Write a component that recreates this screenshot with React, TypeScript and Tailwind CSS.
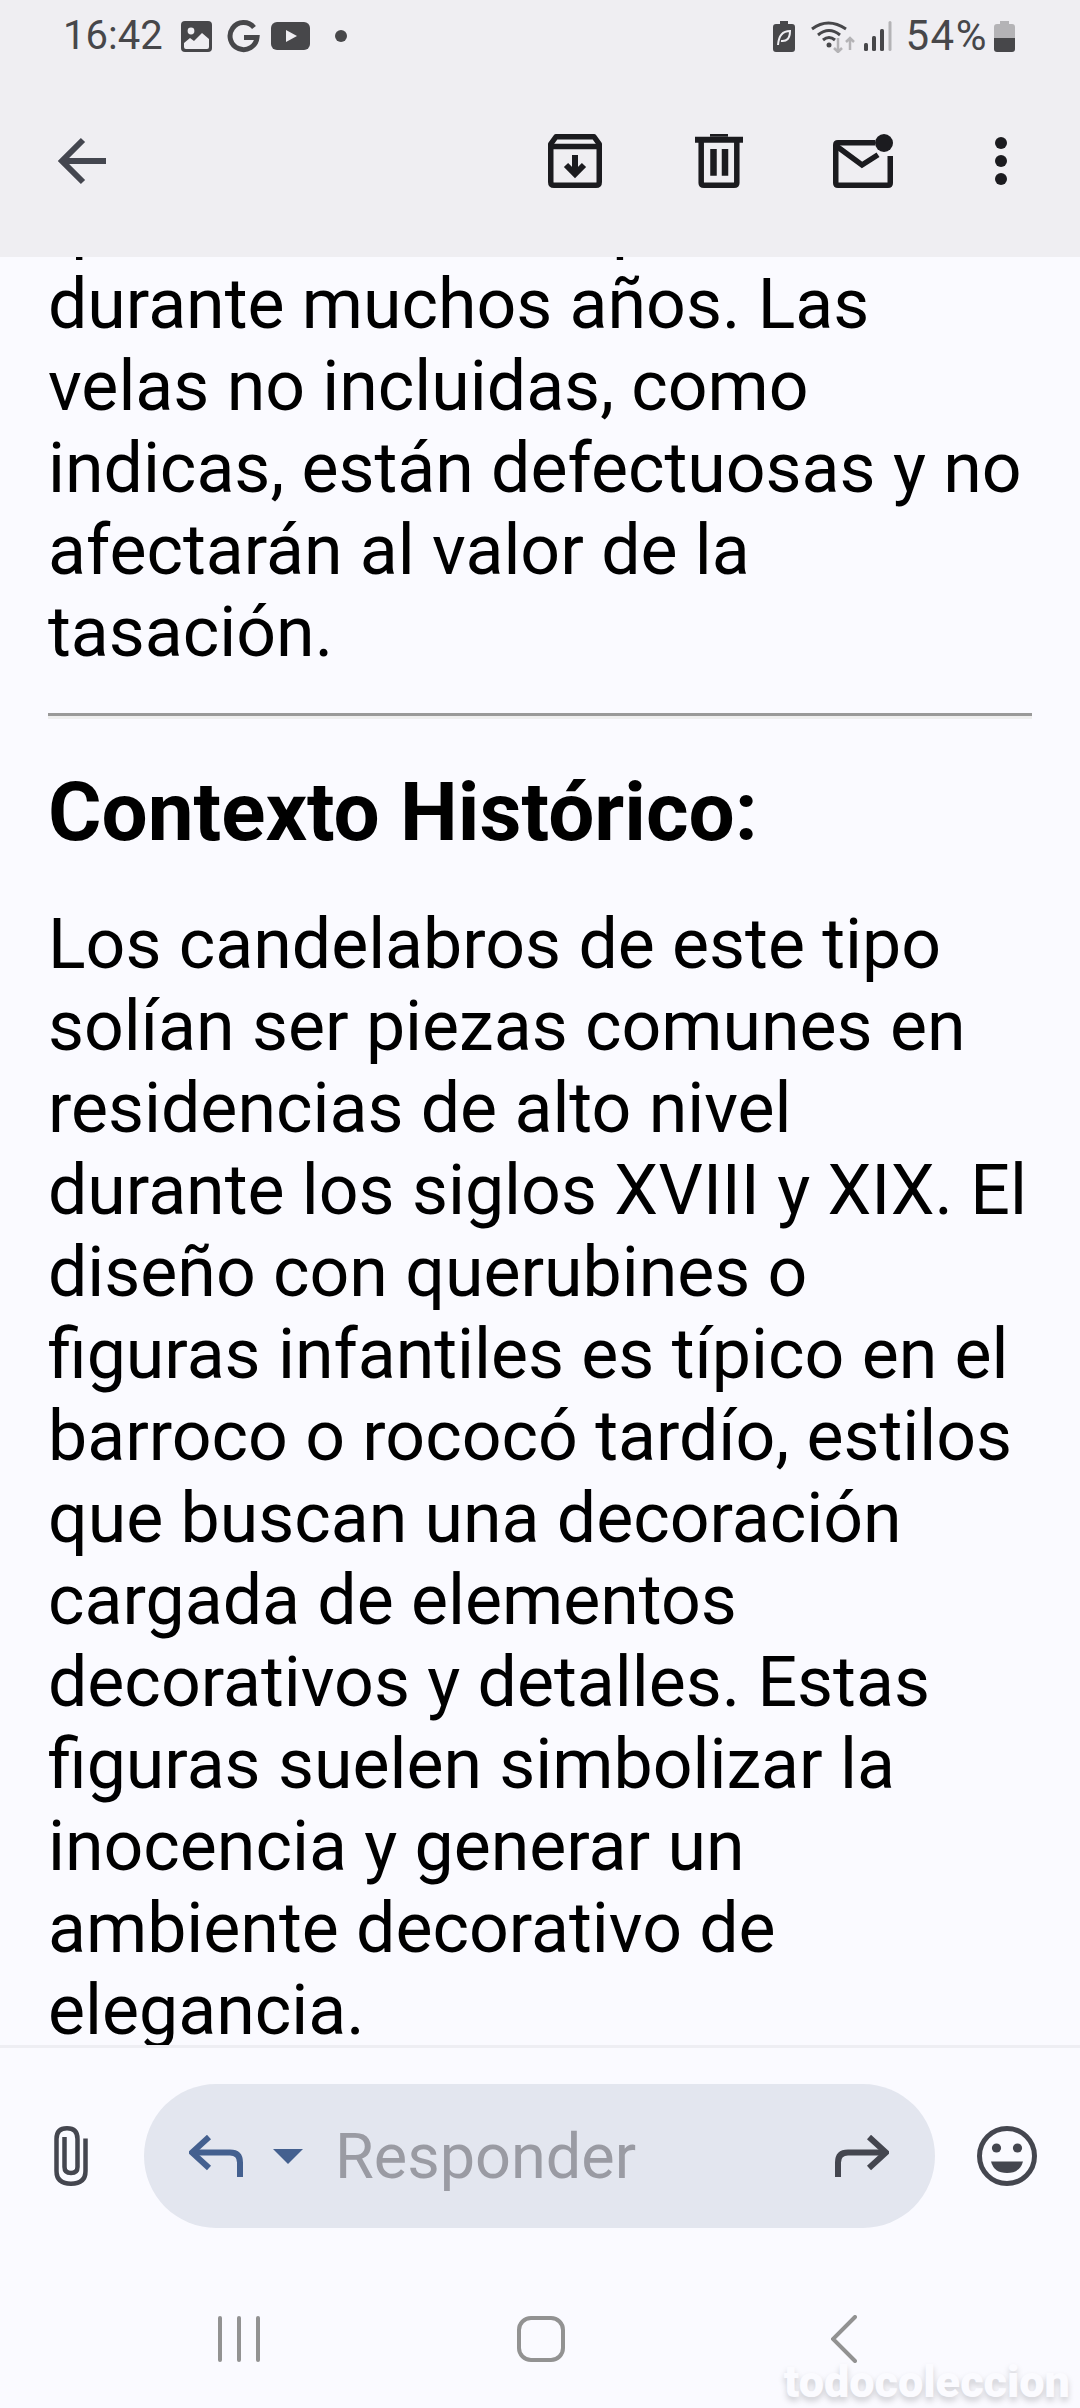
const intro = [
  "que se han usado por",
  "durante muchos años. Las",
  "velas no incluidas, como",
  "indicas, están defectuosas y no",
  "afectarán al valor de la",
  "tasación.",
];

const body = [
  "Los candelabros de este tipo",
  "solían ser piezas comunes en",
  "residencias de alto nivel",
  "durante los siglos XVIII y XIX. El",
  "diseño con querubines o",
  "figuras infantiles es típico en el",
  "barroco o rococó tardío, estilos",
  "que buscan una decoración",
  "cargada de elementos",
  "decorativos y detalles. Estas",
  "figuras suelen simbolizar la",
  "inocencia y generar un",
  "ambiente decorativo de",
  "elegancia.",
];

function StatusBar() {
  return (
    <div className="flex h-[72px] items-center justify-between pl-[63px] pr-[65px] text-[40px] leading-none text-[#47474a]">
      <div className="flex items-center">
        <span>16:42</span>
        <svg className="ml-[18px]" width="31" height="31" viewBox="0 0 31 31" fill="#47474a">
          <rect width="31" height="31" rx="4" />
          <circle cx="10" cy="10" r="3.4" fill="#efeef2" />
          <path d="M3 26 V22 L9 17 L13 20 L21 12 L28 18 V26 Q28 28 26 28 H5 Q3 28 3 26Z" fill="#efeef2" />
        </svg>
        <svg className="ml-[15px]" width="33" height="33" viewBox="0 0 33 33">
          <path d="M27 7.5 A13.5 13.5 0 1 0 30 17.5 H17" fill="none" stroke="#47474a" strokeWidth="5" />
        </svg>
        <svg className="ml-[11px]" width="39" height="28" viewBox="0 0 39 28">
          <rect width="39" height="28" rx="6" fill="#47474a" />
          <path d="M15 8 L26 14 L15 20Z" fill="#efeef2" />
        </svg>
        <span className="ml-[25px] h-[12px] w-[12px] rounded-full bg-[#47474a]" />
      </div>
      <div className="flex items-center">
        <svg width="22" height="31" viewBox="0 0 22 31" fill="#47474a">
          <path d="M7 0 H15 V3 H19 Q22 3 22 6 V28 Q22 31 19 31 H3 Q0 31 0 28 V6 Q0 3 3 3 H7Z" />
          <path d="M5 24 Q6 10 17 10 Q17 21 8 20" fill="none" stroke="#efeef2" strokeWidth="2" />
        </svg>
        <svg className="ml-[15px]" width="45" height="33" viewBox="0 0 45 33" fill="none">
          <path d="M2 9 Q18 -3 36 9" stroke="#47474a" strokeWidth="3" />
          <path d="M8 15 Q19 6 30 15" stroke="#47474a" strokeWidth="3" />
          <path d="M13 20 Q19 15 25 20" stroke="#47474a" strokeWidth="3" />
          <circle cx="19" cy="25" r="2.5" fill="#47474a" />
          <path d="M28 18 V32 M24 28 L28 32 L32 28" stroke="#b4b3b6" strokeWidth="2.5" />
          <path d="M40 30 V18 M36 22 L40 18 L44 22" stroke="#b4b3b6" strokeWidth="2.5" />
        </svg>
        <svg className="ml-[9px]" width="28" height="30" viewBox="0 0 28 30">
          <rect x="0" y="22" width="4" height="8" rx="1.5" fill="#47474a" />
          <rect x="8" y="15" width="4" height="15" rx="1.5" fill="#47474a" />
          <rect x="16" y="8" width="4" height="22" rx="1.5" fill="#47474a" />
          <rect x="24.5" y="0" width="3" height="30" rx="1.5" fill="#b4b3b6" />
        </svg>
        <span className="ml-[14px] text-[42px] tracking-[1.5px]">54%</span>
        <svg className="ml-[6px]" width="21" height="31" viewBox="0 0 21 31">
          <path d="M6 0 H15 V3 H18 Q21 3 21 6 V17 H0 V6 Q0 3 3 3 H6Z" fill="#b4b3b6" />
          <path d="M0 17 H21 V28 Q21 31 18 31 H3 Q0 31 0 28Z" fill="#47474a" />
        </svg>
      </div>
    </div>
  );
}

function Toolbar() {
  return (
    <div className="flex h-[185px] items-center justify-between pb-[8px] pl-[58px] pr-[73px]">
      <svg width="48" height="48" viewBox="0 0 48 48" fill="none" stroke="#44464f" strokeWidth="6">
        <path d="M48 24 H6 M25 3 L4 24 L25 45" />
      </svg>
      <div className="flex items-center">
        <svg width="54" height="54" viewBox="0 0 54 54" fill="none" stroke="#1b1b1f" strokeWidth="5.5">
          <path d="M2.75 10 L8 2.75 H46 L51.25 10 V48 Q51.25 51.25 48 51.25 H6 Q2.75 51.25 2.75 48Z" strokeLinejoin="round" />
          <path d="M2.75 12.5 H51.25" />
          <path d="M27 21 V40 M18 31 L27 40 L36 31" strokeWidth="6" />
        </svg>
        <svg className="ml-[93px]" width="48" height="54" viewBox="0 0 48 54" fill="none" stroke="#1b1b1f" strokeWidth="5.5">
          <path d="M0 5.7 H48" strokeWidth="6" />
          <path d="M15 1.35 H33" strokeWidth="2.7" />
          <path d="M6.2 8 V49 Q6.2 51.25 9 51.25 H39 Q41.8 51.25 41.8 49 V8" />
          <path d="M18.5 15 V41.7 M30 15 V41.7" strokeWidth="6.5" />
        </svg>
        <svg className="ml-[90px]" width="60" height="54" viewBox="0 0 60 54" fill="none" stroke="#1b1b1f" strokeWidth="5.5">
          <path d="M42 8.75 H5 Q2.75 8.75 2.75 11 V49 Q2.75 51.25 5 51.25 H55 Q57.25 51.25 57.25 49 V22" />
          <path d="M4 12.5 L29 31 L45 20.7" />
          <circle cx="51" cy="9" r="9" fill="#1b1b1f" stroke="none" />
        </svg>
        <div className="ml-[102px] flex flex-col gap-[6px]">
          <span className="h-[12px] w-[12px] rounded-full bg-[#1b1b1f]" />
          <span className="h-[12px] w-[12px] rounded-full bg-[#1b1b1f]" />
          <span className="h-[12px] w-[12px] rounded-full bg-[#1b1b1f]" />
        </div>
      </div>
    </div>
  );
}

function ReplyBar() {
  return (
    <div className="flex h-[216px] items-center pl-[54px]">
      <svg width="34" height="60" viewBox="0 0 34 60" fill="none" stroke="#44464f" strokeWidth="4.5">
        <path d="M31.5 12.5 V45 Q31.5 57.7 17 57.7 Q2.5 57.7 2.5 45 V13 Q2.5 2.3 13 2.3 Q23.5 2.3 23.5 13 V41 Q23.5 47 17 47 Q10.5 47 10.5 41 V11" />
      </svg>
      <div className="ml-[56px] flex h-[144px] w-[791px] items-center rounded-full bg-[#e3e6ef] pl-[45px] pr-[46px]">
        <svg width="54" height="42" viewBox="0 0 54 42" fill="none" stroke="#44608f" strokeWidth="6">
          <path d="M20 2 L3 17.5 L20 33" />
          <path d="M3 17.5 H41 Q51 17.5 51 27.5 V42" />
        </svg>
        <svg className="ml-[30px]" width="30" height="15" viewBox="0 0 30 15" fill="#44608f">
          <path d="M0 0 H30 L15 15Z" />
        </svg>
        <span className="ml-[32px] flex-1 text-[63px] leading-none text-[#9a9ba3]">Responder</span>
        <svg width="54" height="42" viewBox="0 0 54 42" fill="none" stroke="#44464f" strokeWidth="6">
          <path d="M34 2 L51 17.5 L34 33" />
          <path d="M51 17.5 H13 Q3 17.5 3 27.5 V42" />
        </svg>
      </div>
      <svg className="ml-[42px]" width="60" height="60" viewBox="0 0 60 60">
        <circle cx="30" cy="30" r="27.5" fill="none" stroke="#44464f" strokeWidth="5" />
        <circle cx="19.5" cy="22" r="4.6" fill="#44464f" />
        <circle cx="40.5" cy="22" r="4.6" fill="#44464f" />
        <path d="M14 35.5 H46 Q43 47 30 47 Q17 47 14 35.5Z" fill="#44464f" />
      </svg>
    </div>
  );
}

function NavBar() {
  return (
    <div className="relative flex flex-1 items-start pl-[218px] pt-[52px]">
      <div className="flex gap-[15px]">
        <span className="h-[46px] w-[4px] rounded-full bg-[#929292]" />
        <span className="h-[46px] w-[4px] rounded-full bg-[#929292]" />
        <span className="h-[46px] w-[4px] rounded-full bg-[#929292]" />
      </div>
      <span className="ml-[257px] h-[46px] w-[48px] rounded-[14px] border-[4px] border-[#929292]" />
      <svg className="ml-[266px] mt-[-1px]" width="26" height="48" viewBox="0 0 26 48" fill="none" stroke="#929292" strokeWidth="4" strokeLinecap="round">
        <path d="M24 2 L2 24 L24 46" />
      </svg>
      <span className="absolute bottom-[4px] right-[10px] text-[45px] font-black leading-none text-[#fbfbff] [text-shadow:0_4px_6px_rgba(0,0,0,0.18)]">
        todocoleccion
      </span>
    </div>
  );
}

export default function App() {
  return (
    <div className="flex h-[2408px] w-[1080px] flex-col overflow-hidden bg-[#fafaff] font-['Roboto',sans-serif]">
      <header className="h-[257px] shrink-0 bg-[#efeef2]">
        <StatusBar />
        <Toolbar />
      </header>
      <main className="h-[1791px] shrink-0 overflow-hidden border-b-[3px] border-[#eeeef3] px-[48px] text-black">
        <div className="mt-[-76px] text-[69.8px] leading-[82px]">
          {intro.map((line) => (
            <div key={line} className="whitespace-nowrap">{line}</div>
          ))}
        </div>
        <hr className="mt-[40px] h-[6px] border-t-[3px] border-b-[3px] border-t-[#999] border-b-[#eee]" />
        <h2 className="mt-[43px] text-[81.8px] font-bold leading-[100px]">Contexto Histórico:</h2>
        <div className="mt-[41px] text-[69.8px] leading-[82px]">
          {body.map((line) => (
            <div key={line} className="whitespace-nowrap">{line}</div>
          ))}
        </div>
      </main>
      <ReplyBar />
      <NavBar />
    </div>
  );
}
